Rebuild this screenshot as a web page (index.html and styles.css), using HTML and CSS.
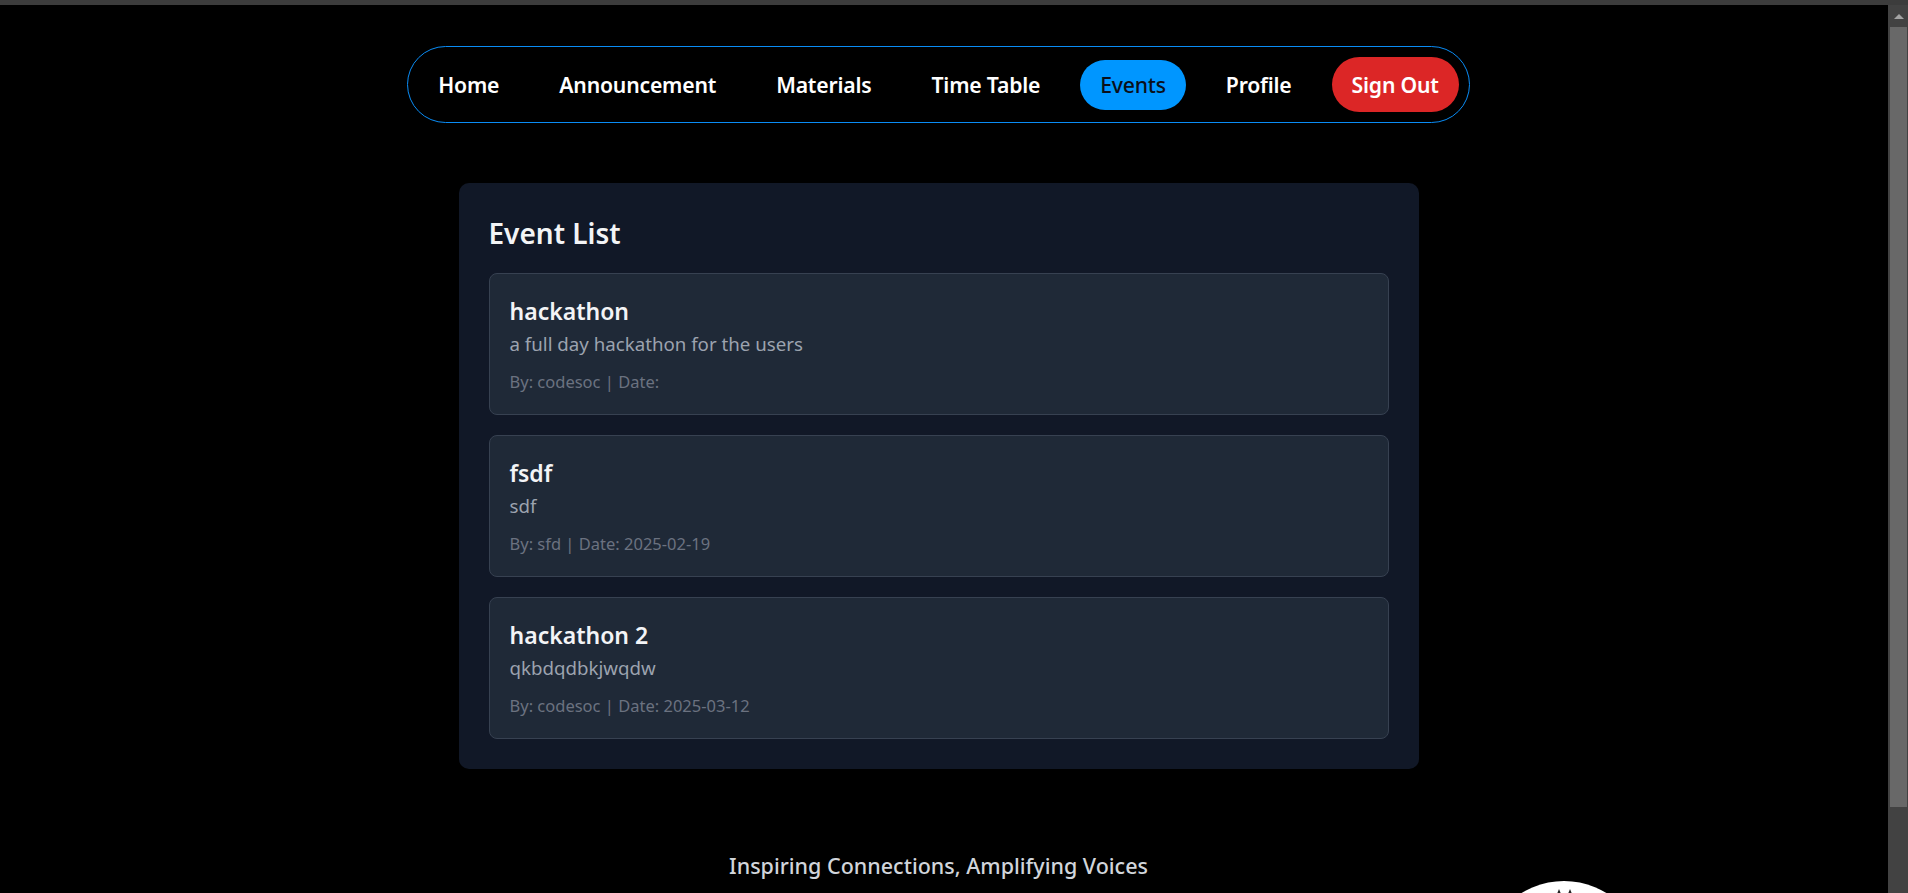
FILE: index.html
```html
<!DOCTYPE html>
<html lang="en">
<head>
<meta charset="utf-8">
<title>Events</title>
<link rel="stylesheet" href="styles.css">
</head>
<body>
<div class="topbar"></div>
<div class="window">
  <main class="main">
    <nav class="nav">
      <a class="nav-link" href="#">Home</a>
      <a class="nav-link" href="#">Announcement</a>
      <a class="nav-link" href="#">Materials</a>
      <a class="nav-link" href="#">Time Table</a>
      <a class="nav-link active" href="#">Events</a>
      <a class="nav-link" href="#">Profile</a>
      <button class="signout" type="button">Sign Out</button>
    </nav>

    <section class="card">
      <h2 class="card-title">Event List</h2>
      <div class="event-list">
        <article class="event">
          <h3 class="event-title">hackathon</h3>
          <p class="event-desc">a full day hackathon for the users</p>
          <p class="event-meta">By: codesoc | Date: </p>
        </article>
        <article class="event">
          <h3 class="event-title">fsdf</h3>
          <p class="event-desc">sdf</p>
          <p class="event-meta">By: sfd | Date: 2025-02-19</p>
        </article>
        <article class="event">
          <h3 class="event-title">hackathon 2</h3>
          <p class="event-desc">qkbdqdbkjwqdw</p>
          <p class="event-meta">By: codesoc | Date: 2025-03-12</p>
        </article>
      </div>
    </section>

    <footer class="footer">
      <p class="tagline">Inspiring Connections, Amplifying Voices</p>
      <div class="logo-row">
        <div class="logo-circle">
          <svg class="logo-mark" width="40" height="20" viewBox="0 0 40 20">
            <path d="M10 18 L15 6 L20 18" fill="none" stroke="#222" stroke-width="3"/>
            <path d="M21 18 L26 6 L31 18" fill="none" stroke="#222" stroke-width="3"/>
          </svg>
        </div>
      </div>
    </footer>
  </main>
  <div class="scrollbar">
    <div class="scroll-arrow"><span class="tri"></span></div>
    <div class="scroll-thumb"></div>
  </div>
</div>
</body>
</html>
```

FILE: styles.css
```css
html, body {
  margin: 0;
  padding: 0;
  height: 893px;
  overflow: hidden;
  background: #000;
  font-family: "Noto Sans", "Open Sans", sans-serif;
}

.topbar {
  height: 5px;
  background: #3c3c3c;
}

.window {
  display: flex;
  height: 888px;
}

.main {
  flex: 1;
  display: flex;
  flex-direction: column;
  align-items: center;
  padding: 41px 11px 0 0;
  overflow: hidden;
}

.nav {
  display: flex;
  align-items: center;
  gap: 20px;
  padding: 10px;
  border: 1px solid #0a8cf5;
  border-radius: 999px;
}

.nav-link {
  display: block;
  padding: 10px 20px;
  border-radius: 999px;
  color: #fff;
  text-decoration: none;
  font-size: 21.2px;
  font-weight: 600;
  line-height: 30px;
  letter-spacing: -0.2px;
}

.nav-link.active {
  background: #0096ff;
  color: #0a0f1a;
  font-weight: 500;
}

.signout {
  display: block;
  padding: 10px 20px;
  border: 0;
  border-radius: 999px;
  background: #dc2626;
  color: #fff;
  font-family: inherit;
  font-size: 21.2px;
  font-weight: 600;
  line-height: 35px;
  letter-spacing: -0.2px;
}

.card {
  box-sizing: border-box;
  width: 960px;
  margin-top: 60px;
  padding: 30px;
  background: #111827;
  border-radius: 10px;
}

.card-title {
  margin: 0 0 20px;
  font-size: 28px;
  line-height: 40px;
  font-weight: 600;
  color: #f3f4f6;
}

.event-list {
  display: flex;
  flex-direction: column;
  gap: 20px;
}

.event {
  padding: 20px;
  background: #1f2937;
  border: 1px solid #374151;
  border-radius: 8px;
}

.event-title {
  margin: 0;
  font-size: 23px;
  line-height: 35px;
  font-weight: 600;
  color: #f3f4f6;
}

.event-desc {
  margin: 0;
  font-size: 18.7px;
  line-height: 30px;
  color: #9ca3af;
}

.event-meta {
  margin: 10px 0 0;
  font-size: 16.5px;
  line-height: 25px;
  color: #6b7280;
}

.footer {
  width: 100%;
  margin-top: 82px;
  display: flex;
  flex-direction: column;
  align-items: center;
}

.tagline {
  margin: 0;
  font-size: 21.5px;
  line-height: 30px;
  font-weight: 500;
  color: #d1d5db;
}

.logo-row {
  width: 100%;
  display: flex;
  justify-content: flex-end;
  padding-right: 232px;
  box-sizing: border-box;
}

.logo-circle {
  width: 162px;
  height: 162px;
  border-radius: 50%;
  background: #fff;
  display: flex;
  justify-content: center;
}

.logo-mark {
  margin-top: 6px;
}

.scrollbar {
  width: 20px;
  background: #424242;
  display: flex;
  flex-direction: column;
  align-items: flex-end;
  padding-right: 1px;
  box-sizing: border-box;
}

.scroll-arrow {
  width: 17px;
  height: 22px;
  display: flex;
  justify-content: center;
  align-items: center;
}

.tri {
  width: 0;
  height: 0;
  border-left: 5px solid transparent;
  border-right: 5px solid transparent;
  border-bottom: 5px solid #a3a3a3;
}

.scroll-thumb {
  width: 17px;
  height: 780px;
  background: #686868;
}
```
